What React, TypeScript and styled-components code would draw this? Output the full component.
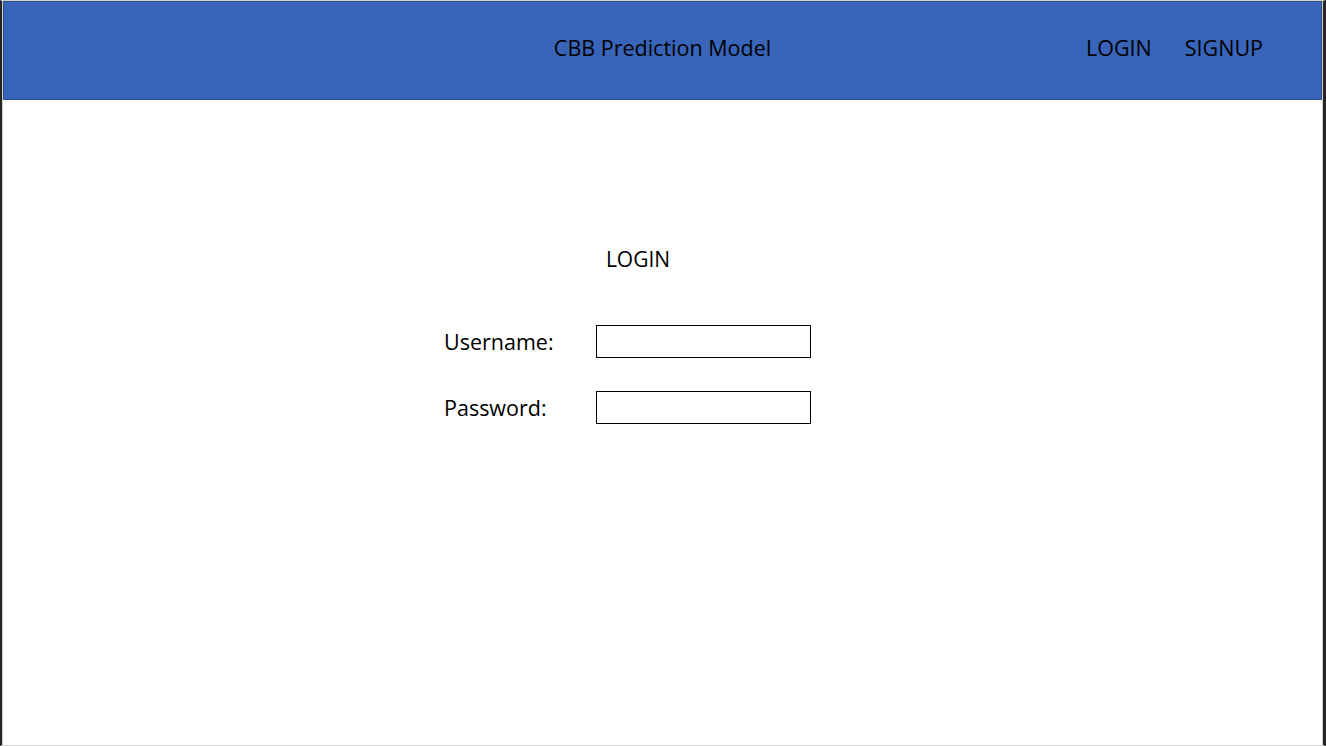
import React from 'react';
import styled, { createGlobalStyle } from 'styled-components';

const GlobalStyle = createGlobalStyle`
  html, body {
    margin: 0;
    padding: 0;
    background: #ffffff;
  }
  body {
    font-family: "Open Sans", "Noto Sans", Arial, sans-serif;
    color: #000;
  }
`;

const Frame = styled.div`
  box-sizing: border-box;
  width: 1326px;
  height: 746px;
  border-left: 2px solid #262626;
  border-right: 3px solid #262626;
  border-top: 1px solid #d4d4d4;
  border-bottom: 1px solid #d4d4d4;
  display: flex;
  flex-direction: column;
  overflow: hidden;
`;

const Inner = styled.div`
  flex: 1;
  display: flex;
  flex-direction: column;
  border-left: 1px solid #d0d0d0;
  border-right: 1px solid #d0d0d0;
`;

const Header = styled.header`
  box-sizing: border-box;
  height: 99px;
  padding-bottom: 6px;
  background: #3865b9;
  border: 1px solid #2f4f89;
  display: grid;
  grid-template-columns: 1fr auto 1fr;
  align-items: center;
`;

const Title = styled.div`
  grid-column: 2;
  font-size: 21.5px;
`;

const Nav = styled.nav`
  grid-column: 3;
  justify-self: end;
  display: flex;
  gap: 33px;
  margin-right: 58px;
`;

const NavLink = styled.a`
  font-size: 21.5px;
  color: #000;
  text-decoration: none;
  cursor: pointer;
`;

const Main = styled.main`
  flex: 1;
  display: flex;
  flex-direction: column;
  align-items: center;
  padding-top: 145px;
  padding-right: 70px;
`;

const Panel = styled.section`
  width: 367px;
  display: flex;
  flex-direction: column;
`;

const FormTitle = styled.h2`
  margin: 0 0 52px 0;
  padding-left: 21px;
  text-align: center;
  font-size: 21px;
  font-weight: 400;
  line-height: 28px;
`;

const Form = styled.form`
  display: grid;
  grid-template-columns: 152px 215px;
  row-gap: 33px;
  align-items: center;
`;

const Label = styled.label`
  font-size: 21.5px;
  line-height: 28px;
`;

const Field = styled.input`
  box-sizing: border-box;
  width: 215px;
  height: 33px;
  border: 1px solid #000;
  border-radius: 0;
  padding: 0 6px;
  font-family: inherit;
  font-size: 16px;
  outline: none;
  background: #fff;
`;

export default function App() {
  return (
    <>
      <GlobalStyle />
      <Frame>
        <Inner>
          <Header>
            <Title>CBB Prediction Model</Title>
            <Nav>
              <NavLink>LOGIN</NavLink>
              <NavLink>SIGNUP</NavLink>
            </Nav>
          </Header>
          <Main>
            <Panel>
              <FormTitle>LOGIN</FormTitle>
              <Form onSubmit={(e) => e.preventDefault()}>
                <Label htmlFor="username">Username:</Label>
                <Field id="username" type="text" />
                <Label htmlFor="password">Password:</Label>
                <Field id="password" type="password" />
              </Form>
            </Panel>
          </Main>
        </Inner>
      </Frame>
    </>
  );
}
